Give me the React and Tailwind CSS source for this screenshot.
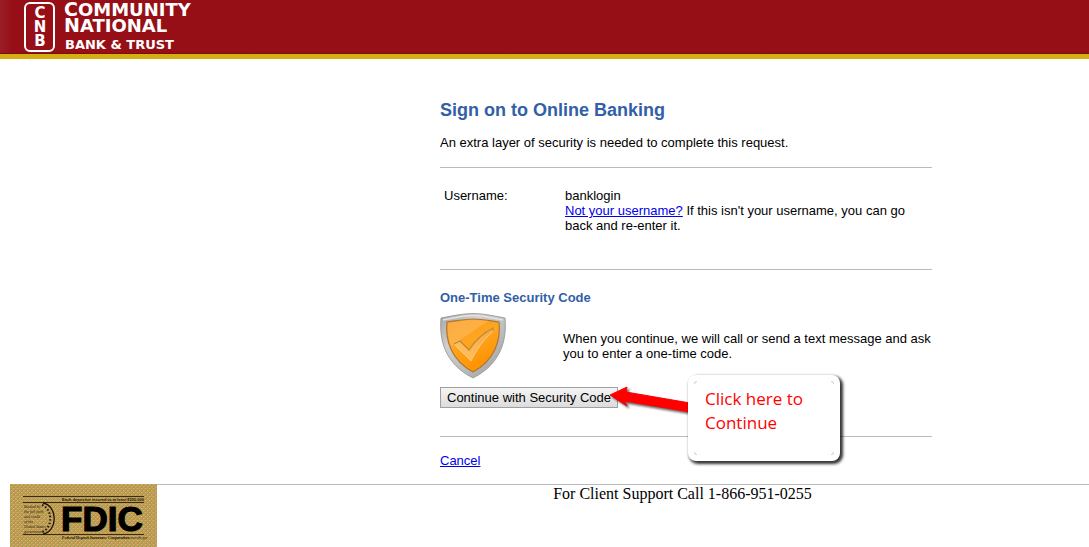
// src/App.jsx
//
// Sign on page - one-time security code step

const SUPPORT_PHONE = '1-866-951-0255'

function BankLogo() {
    return (
        <svg width="200" height="54" viewBox="0 0 200 54" role="img" aria-label="Community National Bank and Trust"
            className="block" fill="#fff" fontFamily="'DejaVu Sans', sans-serif" fontWeight="700">
            <rect x="5" y="3" width="29" height="48" rx="5" fill="none" stroke="#fff" strokeWidth="2" />
            <g fontSize="15" textAnchor="middle">
                <text x="20" y="18">C</text>
                <text x="20" y="32">N</text>
                <text x="20" y="46">B</text>
            </g>
            <text x="44" y="16" fontSize="19">C<tspan fontSize="18">OMMUNITY</tspan></text>
            <text x="44" y="32" fontSize="19">N<tspan fontSize="18">ATIONAL</tspan></text>
            <text x="45" y="49" fontSize="13">BANK &amp; TRUST</text>
        </svg>
    )
}

function Shield() {
    return (
        <svg width="68" height="66" viewBox="0 0 68 66" className="block" aria-hidden="true">
            <defs>
                <linearGradient id="rim" x1="0" y1="0" x2="1" y2="1">
                    <stop offset="0" stopColor="#a4a4a4" />
                    <stop offset="0.3" stopColor="#cfcfcf" />
                    <stop offset="0.6" stopColor="#bdbdbd" />
                    <stop offset="1" stopColor="#999" />
                </linearGradient>
                <linearGradient id="amber" x1="0" y1="0" x2="0.5" y2="1">
                    <stop offset="0" stopColor="#f99a1c" />
                    <stop offset="0.5" stopColor="#ffa51f" />
                    <stop offset="1" stopColor="#ff9100" />
                </linearGradient>
                <linearGradient id="tick" x1="0" y1="1" x2="1" y2="0">
                    <stop offset="0" stopColor="#ffc468" />
                    <stop offset="1" stopColor="#f8a63a" />
                </linearGradient>
            </defs>
            <path d="M1 5C12 3 22 0.5 33 0.5S54 3 65 5C67 27 61 51 33 65C5 51-1 27 1 5Z" fill="url(#rim)" stroke="#909090" strokeWidth="0.8" />
            <path d="M3 7C13 5 23 2.5 33 2.5S53 5 63 7" fill="none" stroke="#e3e3e3" strokeWidth="1.5" />
            <path d="M7 9C16 8 25 6 33 6S51 8 59 9C61 27 55 47 33 59C11 47 5 27 7 9Z" fill="url(#amber)" stroke="#a8783a" strokeWidth="1.2" />
            <path d="M8 10C16 9 25 7 33 7S43 8 48 8L11 33C8 25 7 17 8 10Z" fill="#fff" fillOpacity="0.17" />
            <path d="M14 31L20 28L29 37C35 28 43 20 53 15V18C44 26 37 36 31 48Z" fill="url(#tick)" stroke="#ffd38a" strokeWidth="0.8" />
            <path d="M14 31L20 28L29 37C35 28 43 20 53 15V18" fill="none" stroke="#b98540" strokeWidth="1.2" />
        </svg>
    )
}

function FdicSign() {
    return (
        <svg width="147" height="63" viewBox="0 0 147 63" className="block shrink-0" role="img" aria-label="FDIC">
            <defs>
                <pattern id="grain" width="4" height="4" patternUnits="userSpaceOnUse">
                    <rect width="4" height="4" fill="#c29c50" />
                    <path d="M0 0h1v1H0zM2 2h1v1H2z" fill="#cc9966" />
                    <path d="M1 1h1v1H1zM3 3h1v1H3zM0 2h1v1H0z" fill="#999955" />
                    <path d="M3 0h1v1H3zM1 2h1v1H1z" fill="#d8b860" />
                </pattern>
            </defs>
            <rect width="147" height="63" fill="url(#grain)" />
            <path d="M13 12.5H134M13 18.5H134M13 50.5H134" stroke="#3a2d12" />
            <text x="52" y="17" fontSize="4" fontWeight="700" fontFamily="'Liberation Sans', sans-serif" fill="#1c1507">
                Each depositor insured to at least $250,000
            </text>
            <text x="51" y="47" fontSize="35" fontWeight="700" fontFamily="'Liberation Sans', sans-serif" stroke="#000" strokeWidth="1.2">FDIC</text>
            <text x="52" y="55" fontSize="4" fontWeight="700" fontFamily="'Liberation Serif', serif" fill="#1c1507">
                Federal Deposit Insurance Corporation<tspan fontSize="3" fontWeight="400"> www.fdic.gov</tspan>
            </text>
            <g fontFamily="'Liberation Serif', serif" fontStyle="italic" fontSize="4" fill="#2b210d">
                <text x="14" y="24">Backed by</text>
                <text x="14" y="29">the full faith</text>
                <text x="14" y="34">and credit</text>
                <text x="14" y="39">of the</text>
                <text x="14" y="44">United States</text>
                <text x="14" y="49">government</text>
            </g>
            <path d="M33 19C48 22 48 47 33 50" fill="none" stroke="#1c1507" strokeWidth="1.3" />
            <path d="M32 21C43 25 43 44 32 48" fill="none" stroke="#1c1507" strokeWidth="2" strokeDasharray="1.5 2" />
        </svg>
    )
}

function Callout() {
    return (
        <>
            <svg width="90" height="36" viewBox="0 0 90 36" aria-hidden="true"
                className="absolute left-[168px] -top-1 drop-shadow-[2px_2px_1px_rgba(0,0,0,0.6)]">
                <path d="M2 12L19 4L18 9L82 20V29L16 18L19 23Z" fill="#f00" stroke="#f00" strokeLinejoin="round" />
            </svg>
            <div className="absolute left-[248px] -top-3 w-[152px] h-[86px] rounded-lg bg-white pl-[17px] pr-4 py-3 text-[17px] leading-6 text-[#f00] shadow-[2px_2px_3px_1px_rgba(0,0,0,0.8)] font-['Open_Sans','Noto_Sans',sans-serif]">
                Click here to Continue
                <span className="absolute inset-1.5" aria-hidden="true">
                    <span className="absolute left-0 top-0 size-[3px] rounded-tl border-l border-t border-gray-300" />
                    <span className="absolute right-0 top-0 size-[3px] rounded-tr border-r border-t border-gray-300" />
                    <span className="absolute left-0 bottom-0 size-[3px] rounded-bl border-l border-b border-gray-300" />
                    <span className="absolute right-0 bottom-0 size-[3px] rounded-br border-r border-b border-gray-300" />
                </span>
            </div>
        </>
    )
}

export default function App() {
    return (
        <div className="bg-white text-black text-[13px] leading-[15px] font-['Liberation_Sans',Arial,sans-serif]">
            <header className="bg-[#960f17] bg-linear-to-r from-[#9b1d25] to-[#960f17] to-[12px] border-b-5 border-[#d5ae12] pl-5 shadow-[inset_0_-1px_0_#7b0b10]">
                <BankLogo />
            </header>

            <div className="flex">
                <div className="w-[283px] shrink" />
                <main className="flex-1 pt-10">
                    <div className="mx-auto w-full max-w-[492px]">
                        <h1 className="text-[18px] leading-[22px] font-bold text-[#3160a6]">Sign on to Online Banking</h1>
                        <p className="mt-3.5">An extra layer of security is needed to complete this request.</p>

                        <hr className="mt-[17px] border-[#bbb]" />

                        <dl className="flex pt-5 pb-9 pl-1">
                            <dt className="w-[121px] shrink-0">Username:</dt>
                            <dd className="max-w-[350px]">
                                banklogin<br />
                                <a href="#signon" className="text-[#00e] underline">Not your username?</a> If this isn't your username, you can go back and re-enter it.
                            </dd>
                        </dl>

                        <hr className="border-[#bbb]" />

                        <h2 className="mt-5 font-bold text-[#3160a6]">One-Time Security Code</h2>
                        <div className="mt-2 flex items-center">
                            <div className="w-[123px] shrink-0"><Shield /></div>
                            <p>When you continue, we will call or send a text message and ask you to enter a one-time code.</p>
                        </div>

                        <div className="relative mt-2">
                            <button type="button"
                                className="block h-[21px] border border-[#a0a0a0] bg-linear-to-b from-[#f5f5f5] to-[#dcdcdc] px-1.5 text-[13px] leading-[19px]">
                                Continue with Security Code
                            </button>
                            <Callout />
                        </div>

                        <hr className="mt-7 border-[#bbb]" />
                        <p className="mt-4 pb-4"><a href="#cancel" className="text-[#00e] underline">Cancel</a></p>
                    </div>
                </main>
            </div>

            <footer className="flex pl-2.5">
                <FdicSign />
                <div className="flex flex-1 border-t border-[#bbb]">
                    <div className="w-[119px] shrink" />
                    <p className="flex-1 text-center text-base leading-[18px] font-['Liberation_Serif','Times_New_Roman',serif]">
                        For Client Support Call {SUPPORT_PHONE}
                    </p>
                </div>
            </footer>
        </div>
    )
}
